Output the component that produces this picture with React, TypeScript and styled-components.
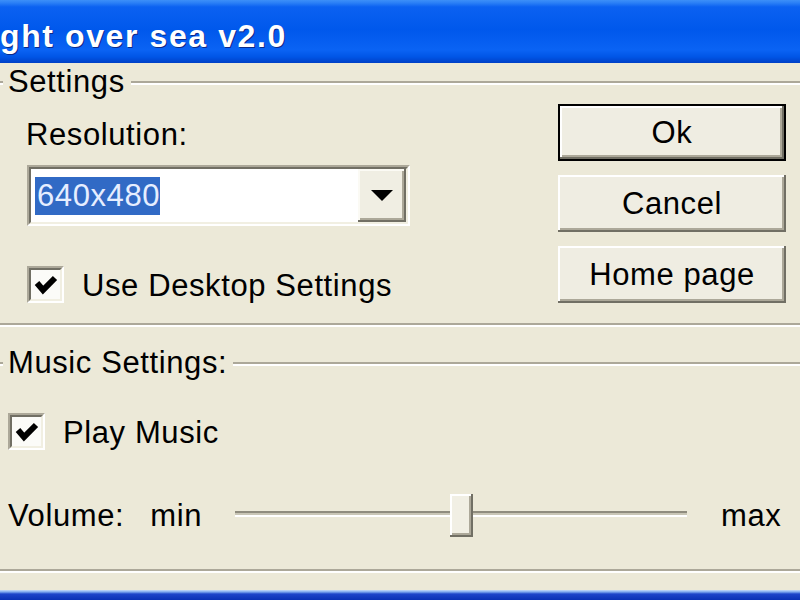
import React from 'react';
import styled, { createGlobalStyle } from 'styled-components';

const GlobalStyle = createGlobalStyle`
  html, body {
    margin: 0;
    padding: 0;
    background: #ece9d8;
  }
  body {
    font-family: "Liberation Sans", Arial, sans-serif;
  }
`;

const face = '#ece9d8';
const shadow = '#aca899';
const darkShadow = '#716f64';

const Window = styled.div`
  width: 800px;
  height: 600px;
  display: flex;
  flex-direction: column;
  overflow: hidden;
  background: ${face};
  color: #000;
  font-size: 31px;
  letter-spacing: 0.6px;
  line-height: 36px;
`;

const TitleBar = styled.div`
  height: 63px;
  flex: none;
  display: flex;
  align-items: center;
  background: linear-gradient(
    to bottom,
    #3d8ff8 0px,
    #2a7ff6 3px,
    #0b61f1 7px,
    #0058ec 30px,
    #0a63f4 50px,
    #0055e6 57px,
    #0040c6 63px
  );
`;

const Title = styled.span`
  color: #fff;
  font-weight: bold;
  font-size: 32px;
  letter-spacing: 1.6px;
  padding-top: 8px;
  white-space: nowrap;
  text-shadow: 1px 1px 0 #0a2a8a;
`;

const Body = styled.div`
  flex: 1;
  display: flex;
  flex-direction: column;
  padding-top: 1px;
`;

const BottomFrame = styled.div`
  height: 10px;
  flex: none;
  background: linear-gradient(
    to bottom,
    #c6dcf8 0px,
    #7aa6ee 2px,
    #1d45c9 4px,
    #0931b4 10px
  );
`;

const GroupBox = styled.div<{ $top?: number }>`
  margin: ${(p) => p.$top ?? 0}px -4px 0 -4px;
  border-bottom: 2px solid ${shadow};
  box-shadow: 0 2px 0 #fff;
`;

const GroupHeader = styled.div`
  height: 36px;
  display: flex;
  align-items: center;
`;

const GroupContent = styled.div<{ $pad: string }>`
  padding: ${(p) => p.$pad};
`;

const Rule = styled.div<{ $width?: number }>`
  height: 2px;
  background: ${shadow};
  box-shadow: 0 2px 0 #fff;
  ${(p) => (p.$width ? `width: ${p.$width}px; flex: none;` : 'flex: 1;')}
`;

const Legend = styled.span`
  padding: 0 6px 0 5px;
  white-space: nowrap;
`;

const SettingsRow = styled.div`
  display: flex;
  justify-content: space-between;
  align-items: flex-start;
`;

const LeftColumn = styled.div`
  display: flex;
  flex-direction: column;
  padding-top: 17px;
`;

const Label = styled.div`
  margin-left: -1px;
  white-space: nowrap;
`;

const ComboOuter = styled.div`
  margin-top: 12px;
  width: 383px;
  height: 61px;
  box-sizing: border-box;
  border-style: solid;
  border-width: 2px;
  border-color: ${shadow} #fff #fff ${shadow};
`;

const ComboInner = styled.div`
  height: 100%;
  box-sizing: border-box;
  border-style: solid;
  border-width: 2px;
  border-color: ${darkShadow} #f1efe2 #f1efe2 ${darkShadow};
  background: #fff;
  display: flex;
  align-items: center;
  padding-left: 4px;
`;

const Selection = styled.span`
  display: inline-block;
  width: 125px;
  height: 38px;
  line-height: 38px;
  overflow: hidden;
  white-space: nowrap;
  padding-left: 2px;
  box-sizing: border-box;
  background: #316ac5;
  color: #e6eeff;
`;

const DropButton = styled.div`
  margin-left: auto;
  width: 48px;
  height: 100%;
  background: #f0eee3;
  box-shadow: inset -2px -2px 0 ${darkShadow}, inset 2px 2px 0 #fbfaf4,
    inset -4px -4px 0 ${shadow};
  display: flex;
  align-items: center;
  justify-content: center;
`;

const CheckRow = styled.div<{ $top: number }>`
  margin-top: ${(p) => p.$top}px;
  display: flex;
  align-items: center;
  gap: 18px;
`;

const CheckBox = styled.div`
  width: 37px;
  height: 37px;
  box-sizing: border-box;
  border-style: solid;
  border-width: 2px;
  border-color: ${shadow} #fff #fff ${shadow};
`;

const CheckInner = styled.div`
  height: 100%;
  box-sizing: border-box;
  border-style: solid;
  border-width: 2px;
  border-color: ${darkShadow} #f1efe2 #f1efe2 ${darkShadow};
  background: #fbfbf8;
  display: flex;
  align-items: center;
  justify-content: center;
`;

const CheckLabel = styled.span`
  padding-top: 3px;
  white-space: nowrap;
`;

const ButtonColumn = styled.div`
  padding-top: 4px;
  display: flex;
  flex-direction: column;
  gap: 14px;
`;

const Button = styled.div<{ $default?: boolean }>`
  width: 228px;
  height: 57px;
  box-sizing: border-box;
  display: flex;
  align-items: center;
  justify-content: center;
  background: #efede2;
  border: ${(p) => (p.$default ? '2px solid #000' : 'none')};
  box-shadow: inset -2px -2px 0 ${darkShadow}, inset 2px 2px 0 #fff,
    inset -4px -4px 0 ${shadow};
`;

const VolumeRow = styled.div`
  margin-top: 43px;
  height: 43px;
  display: flex;
  align-items: center;
`;

const Text = styled.span<{ $ml?: number }>`
  margin-left: ${(p) => p.$ml ?? 0}px;
  white-space: nowrap;
`;

const Track = styled.div`
  position: relative;
  margin: -4px 0 0 33px;
  width: 452px;
  height: 6px;
  box-sizing: border-box;
  border-top: 2px solid #8f8c7e;
  border-bottom: 2px solid #fff;
  background: #c9c6b6;
`;

const Thumb = styled.div`
  position: absolute;
  top: -19px;
  width: 23px;
  height: 43px;
  margin-left: -11px;
  background: #f1efe4;
  box-shadow: inset -2px -2px 0 ${darkShadow}, inset 2px 2px 0 #fff,
    inset -4px -4px 0 ${shadow};
`;

const Check = () => (
  <svg width="26" height="22" viewBox="0 0 26 22">
    <polyline
      points="4,9 10,16 22,4"
      fill="none"
      stroke="#000"
      strokeWidth="6"
      strokeLinejoin="miter"
    />
  </svg>
);

const Checkbox: React.FC<{ label: string; top: number }> = ({ label, top }) => (
  <CheckRow $top={top}>
    <CheckBox>
      <CheckInner>
        <Check />
      </CheckInner>
    </CheckBox>
    <CheckLabel>{label}</CheckLabel>
  </CheckRow>
);

const Group: React.FC<{ title: string; top?: number; pad: string; children: React.ReactNode }> = ({
  title,
  top,
  pad,
  children
}) => (
  <GroupBox $top={top}>
    <GroupHeader>
      <Rule $width={7} />
      <Legend>{title}</Legend>
      <Rule />
    </GroupHeader>
    <GroupContent $pad={pad}>{children}</GroupContent>
  </GroupBox>
);

const App: React.FC = () => {
  const volume = 50;

  return (
    <>
      <GlobalStyle />
      <Window>
        <TitleBar>
          <Title>ght over sea v2.0</Title>
        </TitleBar>
        <Body>
          <Group title="Settings" pad="0 18px 19px 31px">
            <SettingsRow>
              <LeftColumn>
                <Label>Resolution:</Label>
                <ComboOuter>
                  <ComboInner>
                    <Selection>640x480</Selection>
                    <DropButton>
                      <svg width="22" height="12" viewBox="0 0 22 12">
                        <polygon points="0,0 22,0 11,11" fill="#000" />
                      </svg>
                    </DropButton>
                  </ComboInner>
                </ComboOuter>
                <Checkbox label="Use Desktop Settings" top={39} />
              </LeftColumn>
              <ButtonColumn>
                <Button $default>Ok</Button>
                <Button>Cancel</Button>
                <Button>Home page</Button>
              </ButtonColumn>
            </SettingsRow>
          </Group>
          <Group title="Music Settings:" top={20} pad="0 0 32px 12px">
            <Checkbox label="Play Music" top={31} />
            <VolumeRow>
              <Text>Volume:</Text>
              <Text $ml={26}>min</Text>
              <Track>
                <Thumb style={{ left: `${volume}%` }} />
              </Track>
              <Text $ml={34}>max</Text>
            </VolumeRow>
          </Group>
        </Body>
        <BottomFrame />
      </Window>
    </>
  );
};

export default App;
